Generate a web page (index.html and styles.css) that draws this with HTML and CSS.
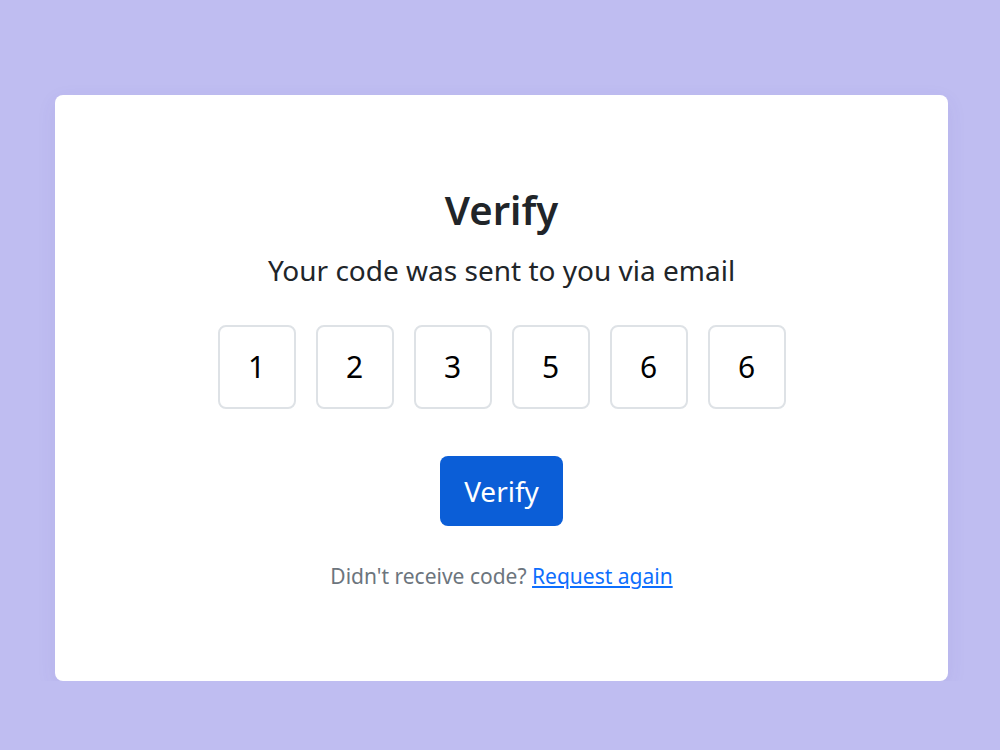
FILE: index.html
```html
<!DOCTYPE html>
<html lang="en">
<head>
    <meta charset="UTF-8">
    <meta name="viewport" content="width=device-width, initial-scale=1.0">
    <title>Verify</title>
    <link rel="stylesheet" href="styles.css">
</head>
<body>
    <div class="card">
        <h1>Verify</h1>
        <p class="subtitle">Your code was sent to you via email</p>
        <form class="code-form">
            <div class="code-inputs">
                <input type="text" maxlength="1" value="1">
                <input type="text" maxlength="1" value="2">
                <input type="text" maxlength="1" value="3">
                <input type="text" maxlength="1" value="5">
                <input type="text" maxlength="1" value="6">
                <input type="text" maxlength="1" value="6">
            </div>
            <button type="submit">Verify</button>
        </form>
        <p class="resend">Didn't receive code? <a href="#">Request again</a></p>
    </div>
</body>
</html>
```

FILE: styles.css
```css
body {
    margin: 0;
    padding: 95px 0 0 3px;
    font-family: "Noto Sans", "Open Sans", sans-serif;
    background-color: #bfbdf1;
    color: #212529;
    display: flex;
    justify-content: center;
}
.card {
    width: 893px;
    height: 586px;
    box-sizing: border-box;
    background-color: #fff;
    border-radius: 8px;
    box-shadow: 0 6px 20px rgba(80, 70, 160, 0.08);
    display: flex;
    flex-direction: column;
    align-items: center;
    justify-content: center;
    text-align: center;
}
h1 {
    margin: 0;
    font-size: 40px;
    font-weight: 600;
    line-height: 1.2;
}
.subtitle {
    margin: 20px 0 0;
    font-size: 28px;
    line-height: 1.2;
}
.code-form {
    display: flex;
    flex-direction: column;
    align-items: center;
}
.code-inputs {
    display: flex;
    gap: 20px;
    margin-top: 37px;
}
.code-inputs input {
    width: 78px;
    height: 84px;
    box-sizing: border-box;
    border: 2px solid #dee2e6;
    border-radius: 8px;
    text-align: center;
    font-family: inherit;
    font-size: 30px;
    color: #000;
    padding: 0;
}
button {
    margin-top: 47px;
    width: 123px;
    height: 70px;
    background-color: #0b5ed7;
    color: #fff;
    border: none;
    border-radius: 8px;
    font-family: inherit;
    font-size: 28px;
    cursor: pointer;
}
.resend {
    margin: 36px 0 0;
    font-size: 21px;
    color: #6c757d;
}
.resend a {
    color: #0d6efd;
}
```
